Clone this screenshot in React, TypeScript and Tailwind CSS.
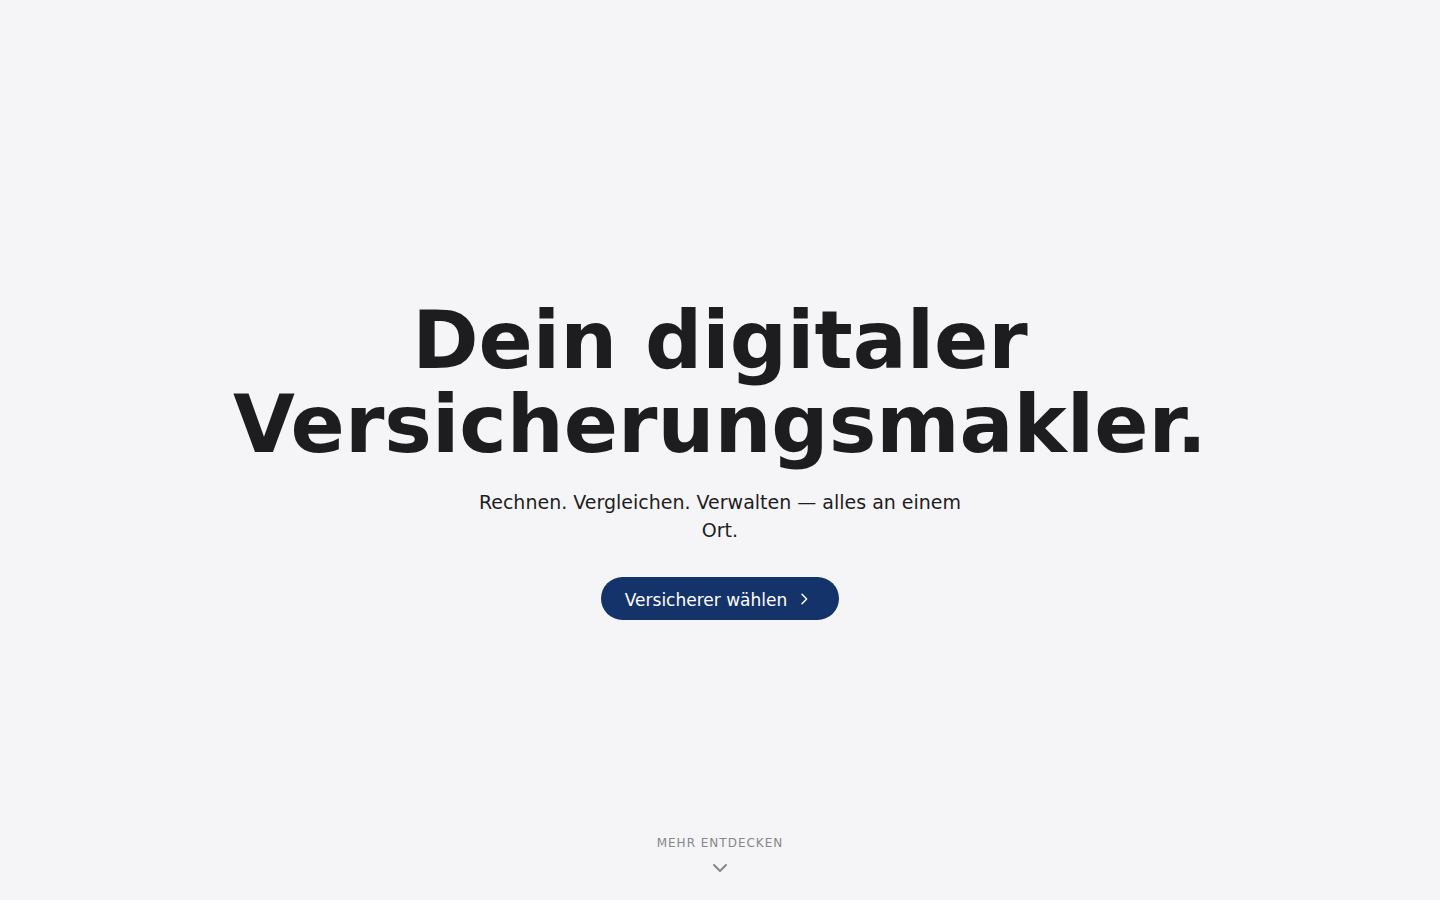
import React from "react";

export default function App() {
  return (
    <div
      className="relative flex min-h-screen w-full flex-col items-center justify-center bg-[#f5f5f7] text-[#1d1d1f]"
      style={{ fontFamily: '"DejaVu Sans", sans-serif' }}
    >
      <div className="flex flex-col items-center px-6 pt-[19px] text-center">
        <h1 className="text-[80px] font-bold leading-[84px] text-[#1d1d1f]">
          Dein digitaler
          <br />
          Versicherungsmakler.
        </h1>
        <p className="mt-[21px] max-w-lg text-[19px] leading-[28px] text-[#1d1d1f]">
          Rechnen. Vergleichen. Verwalten — alles an einem Ort.
        </p>
        <button className="mt-[33px] flex h-[43px] items-center gap-[9px] rounded-full bg-[#14336a] pl-6 pr-[27px] text-[17px] text-white">
          <span className="leading-[24px] translate-y-[1px]">Versicherer wählen</span>
          <svg width="16" height="16" viewBox="0 0 24 24" fill="none" stroke="currentColor" strokeWidth="2.25" strokeLinecap="round" strokeLinejoin="round">
            <path d="M9 5l7 7-7 7" />
          </svg>
        </button>
      </div>
      <div className="absolute bottom-[26px] left-0 right-0 flex flex-col items-center">
        <span className="text-[12px] tracking-[1px] text-[#86868b]">MEHR ENTDECKEN</span>
        <svg className="mt-[10px]" width="18" height="12" viewBox="0 0 18 12" fill="none" stroke="#86868b" strokeWidth="2" strokeLinecap="round" strokeLinejoin="round">
          <path d="M3 3l6 6 6-6" />
        </svg>
      </div>
    </div>
  );
}
